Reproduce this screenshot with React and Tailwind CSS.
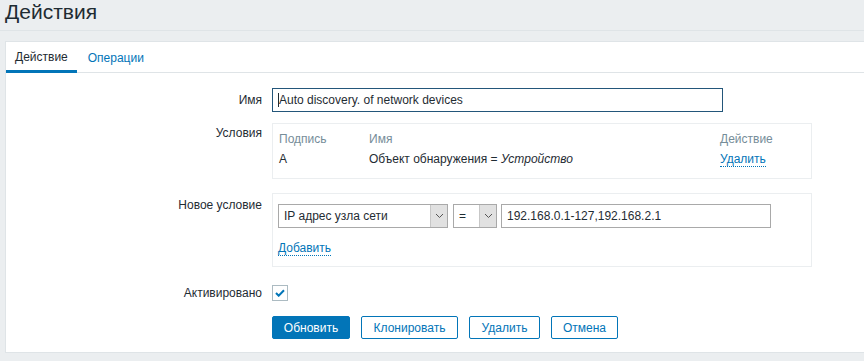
import React from 'react';

const Chevron = () => (
  <svg width="9" height="6" viewBox="0 0 9 6" fill="none">
    <path d="M1 1l3.5 3.5L8 1" stroke="#555" strokeWidth="1" />
  </svg>
);

const Select = ({ value, width }) => (
  <div className={`flex h-[24px] border border-[#a9a9a9] bg-white ${width}`}>
    <div className="flex-1 flex items-center pl-[5px] text-[12px] text-[#1f2c33]">{value}</div>
    <div className="w-[17px] flex items-center justify-center bg-[#e1e1e1] border-l border-[#c7c7c7]">
      <Chevron />
    </div>
  </div>
);

const Label = ({ children, className = '' }) => (
  <div className={`w-[266px] shrink-0 text-right pr-[10px] text-[12px] text-[#1f2c33] leading-[14px] ${className}`}>
    {children}
  </div>
);

export default function App() {
  return (
    <div className="w-full h-[361px] bg-[#ebeef0] overflow-hidden" style={{ fontFamily: '"Liberation Sans", Arial, sans-serif' }}>
      {/* Page header */}
      <div className="h-[31px] px-[5px] border-b border-[#dfe4e7] flex items-center">
        <h1 className="text-[21px] leading-[24px] text-[#1f2c33] -mt-[6px]">Действия</h1>
      </div>

      {/* Card */}
      <div className="ml-[5px] mt-[10px] h-[312px] bg-white border-t border-l border-b border-[#dfe4e7]">
        {/* Tabs */}
        <div className="h-[31px] border-b border-[#dfe4e7] flex text-[12px]">
          <div className="px-[9px] flex items-center text-[#1f2c33] border-b-[3px] border-[#0275b8] -mb-px pt-[2px]">Действие</div>
          <div className="px-[11px] flex items-center text-[#0275b8] pt-[2px]">Операции</div>
        </div>

        {/* Form */}
        <div className="pt-[15px]">
          <div className="flex items-center">
            <Label>Имя</Label>
            <div className="w-[451px] h-[24px] border border-[#23567a] flex items-center pl-[5px] text-[12px] text-[#1f2c33]">
              <span className="w-px h-[14px] bg-[#1f2c33]" />
              Auto discovery. of network devices
            </div>
          </div>

          <div className="flex mt-[11px]">
            <Label className="pt-[3px]">Условия</Label>
            <div className="w-[540px] h-[56px] border border-[#ebeef0] px-[6px] pt-[5px] text-[12px]">
              <div className="flex h-[20px] items-center text-[#768d99]">
                <div className="w-[90px]">Подпись</div>
                <div className="flex-1">Имя</div>
                <div className="w-[85px]">Действие</div>
              </div>
              <div className="flex h-[20px] items-center text-[#1f2c33]">
                <div className="w-[90px]">A</div>
                <div className="flex-1">Объект обнаружения = <i>Устройство</i></div>
                <div className="w-[85px]">
                  <span className="text-[#0275b8] border-b border-dotted border-[#0275b8] leading-[13px] inline-block">Удалить</span>
                </div>
              </div>
            </div>
          </div>

          <div className="flex mt-[14px]">
            <Label className="pt-[5px]">Новое условие</Label>
            <div className="w-[540px] h-[74px] border border-[#ebeef0] pl-[5px] pt-[10px]">
              <div className="flex gap-[5px]">
                <Select value="IP адрес узла сети" width="w-[170px]" />
                <Select value="=" width="w-[44px]" />
                <div className="-ml-px w-[270px] h-[24px] border border-[#a9a9a9] flex items-center pl-[5px] text-[12px] text-[#1f2c33]">
                  192.168.0.1-127,192.168.2.1
                </div>
              </div>
              <div className="mt-[11px] text-[12px]">
                <span className="text-[#0275b8] border-b border-dotted border-[#0275b8] leading-[13px] inline-block">Добавить</span>
              </div>
            </div>
          </div>

          <div className="flex items-center mt-[18px]">
            <Label>Активировано</Label>
            <div className="w-[16px] h-[16px] border border-[#acbbc2] flex items-center justify-center">
              <svg width="10" height="8" viewBox="0 0 10 8" fill="none">
                <path d="M1 4l2.7 2.7L9 1.3" stroke="#0275b8" strokeWidth="2" />
              </svg>
            </div>
          </div>

          <div className="flex gap-[11px] mt-[15px] pl-[266px] text-[12px]">
            <button className="w-[78px] h-[23px] rounded-[2px] bg-[#0275b8] border border-[#0275b8] text-white">Обновить</button>
            <button className="w-[97px] h-[23px] rounded-[2px] bg-white border border-[#0275b8] text-[#0275b8]">Клонировать</button>
            <button className="w-[71px] h-[23px] rounded-[2px] bg-white border border-[#0275b8] text-[#0275b8]">Удалить</button>
            <button className="w-[67px] h-[23px] rounded-[2px] bg-white border border-[#0275b8] text-[#0275b8]">Отмена</button>
          </div>
        </div>
      </div>
    </div>
  );
}
